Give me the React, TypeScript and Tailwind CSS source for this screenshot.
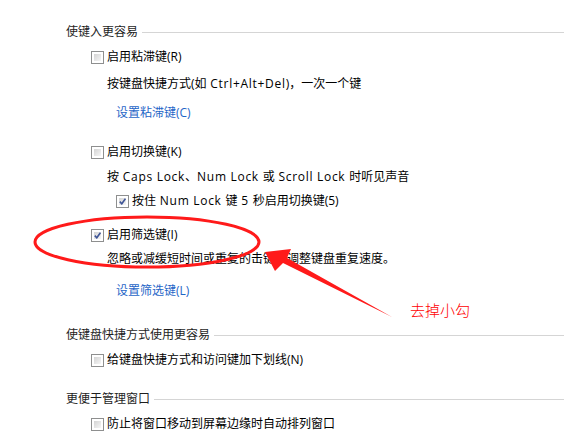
import React from 'react';

const font = { fontFamily: '"Open Sans", "Noto Sans CJK SC", sans-serif' };

const Checkbox: React.FC<{ checked?: boolean }> = ({ checked }) => (
  <span className="relative inline-flex w-[13px] h-[13px] shrink-0 border border-[#8e8f8f] bg-white">
    <span className="m-[2px] flex-1 bg-gradient-to-br from-[#d4d4d4] to-[#f6f6f6]">
      {checked && (
        <svg viewBox="0 0 7 7" className="w-full h-full">
          <path d="M0.8 3.6 L2.8 5.8 L6.4 0.6" fill="none" stroke="#3f5597" strokeWidth="1.6" />
        </svg>
      )}
    </span>
  </span>
);

const Header: React.FC<{ text: string; className?: string }> = ({ text, className }) => (
  <div className={`flex items-center h-[20px] ${className ?? ''}`}>
    <span className="text-[12px] text-[#1e1e1e] leading-[20px]">{text}</span>
    <div className="flex-1 h-px bg-[#d5d5d5] ml-[4px] mt-[1px]" />
  </div>
);

const CheckRow: React.FC<{ children: React.ReactNode; checked?: boolean; className?: string }> = ({
  children,
  checked,
  className,
}) => (
  <div className={`flex items-center gap-[3px] h-[20px] ${className ?? ''}`}>
    <Checkbox checked={checked} />
    <span className="text-[12px] text-black leading-[20px] whitespace-nowrap">{children}</span>
  </div>
);

const Text: React.FC<{ children: React.ReactNode; className?: string }> = ({ children, className }) => (
  <div className={`h-[20px] text-[12px] text-black leading-[20px] whitespace-nowrap ${className ?? ''}`}>{children}</div>
);

const Link: React.FC<{ text: string; className?: string }> = ({ text, className }) => (
  <div className={`h-[20px] text-[12px] text-[#1f66c7] leading-[20px] whitespace-nowrap ${className ?? ''}`}>{text}</div>
);

// latin runs are a touch wider in the original UI font
const L: React.FC<{ children: React.ReactNode }> = ({ children }) => (
  <span className="tracking-[0.7px]">{children}</span>
);

export default function App() {
  return (
    <div className="relative w-[564px] h-[438px] bg-white overflow-hidden" style={font}>
      <div className="pt-[22px] pl-[66px] flex flex-col">
        <Header text="使键入更容易" />
        <CheckRow className="mt-[5px] ml-[25px]">启用粘滞键(R)</CheckRow>
        <Text className="mt-[7px] ml-[41px]">
          按键盘快捷方式(如<L> Ctrl+Alt+Del</L>)，一次一个键
        </Text>
        <Link text="设置粘滞键(C)" className="mt-[9px] ml-[50px]" />

        <CheckRow className="mt-[19px] ml-[25px]">启用切换键(K)</CheckRow>
        <Text className="mt-[5px] ml-[41px]">
          按<L> Caps Lock</L>、<L>Num Lock </L>或<L> Scroll Lock </L>时听见声音
        </Text>
        <CheckRow checked className="mt-[4px] ml-[50px]">
          按住<L> Num Lock </L>键<L> 5 </L>秒启用切换键(5)
        </CheckRow>

        <CheckRow checked className="mt-[14px] ml-[25px]">启用筛选键(I)</CheckRow>
        <Text className="mt-[4px] ml-[41px]">忽略或减缓短时间或重复的击键，调整键盘重复速度。</Text>
        <Link text="设置筛选键(L)" className="mt-[12px] ml-[50px]" />

        <Header text="使键盘快捷方式使用更容易" className="mt-[24px]" />
        <CheckRow className="mt-[5px] ml-[25px]">给键盘快捷方式和访问键加下划线(N)</CheckRow>

        <Header text="更便于管理窗口" className="mt-[19px]" />
        <CheckRow className="mt-[5px] ml-[25px]">防止将窗口移动到屏幕边缘时自动排列窗口</CheckRow>
      </div>

      {/* annotation overlay */}
      <svg className="absolute inset-0 pointer-events-none" width="564" height="438" viewBox="0 0 564 438">
        <ellipse cx="147" cy="242" rx="112" ry="25" fill="none" stroke="#ff1a1a" strokeWidth="3" />
        <polygon points="265,252 291,249 287,258 392,317 283,263 275,271" fill="#ff1a1a" />
      </svg>
      <div
        className="absolute left-[410px] top-[300px] text-[15px] font-light text-[#ff0000] leading-[20px]"
        style={{ fontFamily: '"Noto Sans CJK SC", sans-serif' }}
      >
        去掉小勾
      </div>
    </div>
  );
}
